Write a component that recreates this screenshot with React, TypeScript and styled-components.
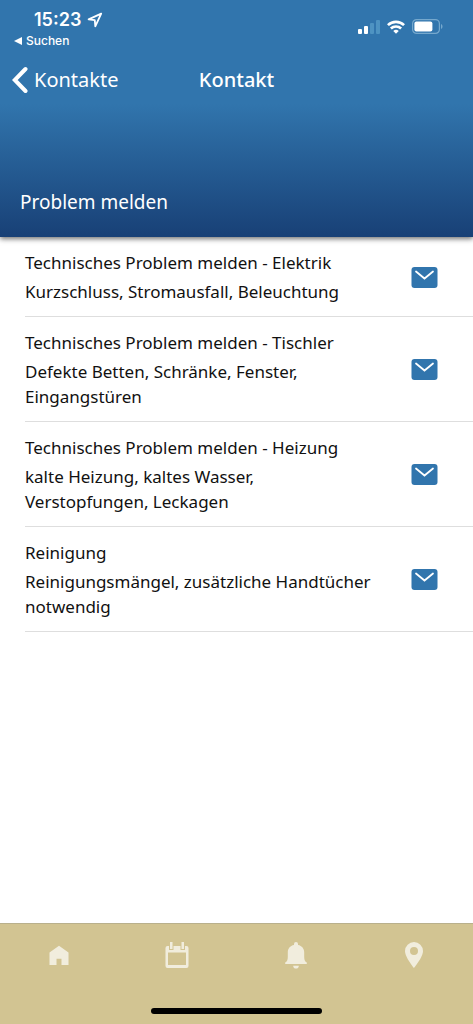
import React from "react";
import styled, { createGlobalStyle } from "styled-components";

const GlobalStyle = createGlobalStyle`
  *, *::before, *::after { box-sizing: border-box; }
  body {
    margin: 0;
    background: #fff;
    color: #111;
    font-family: "Noto Sans", "Open Sans", sans-serif;
  }
  button { border: 0; padding: 0; background: none; color: inherit; font: inherit; cursor: pointer; }
  svg { display: block; }
  h1, h2, h3, p, ul { margin: 0; padding: 0; font-weight: 400; }
`;

const Screen = styled.div`
  display: flex;
  flex-direction: column;
  min-height: 100vh;
`;

const Header = styled.header`
  position: relative;
  display: flex;
  flex-direction: column;
  color: #fff;
  background: linear-gradient(to bottom, #3175ad 0, #3175ad 104px, #184076 100%);
  box-shadow: 0 2px 5px rgba(0, 0, 0, 0.55);
`;

const StatusBar = styled.div`
  display: flex;
  justify-content: space-between;
  align-items: flex-start;
  height: 52px;
  padding: 8px 30px 0 14px;
  font-family: Inter, sans-serif;
`;

const Clock = styled.div`
  display: flex;
  align-items: center;
  gap: 6px;
  padding-left: 20px;
  font-size: 18px;
  font-weight: 600;
  line-height: 24px;
`;

const ReturnLink = styled.a`
  display: flex;
  align-items: center;
  gap: 4px;
  color: inherit;
  font-size: 12px;
  font-weight: 500;
  line-height: 18px;
  text-decoration: none;
`;

const StatusIcons = styled.div`
  display: flex;
  align-items: center;
  gap: 7px;
  padding-top: 11px;
`;

const NavBar = styled.nav`
  display: grid;
  grid-template-columns: 1fr auto 1fr;
  align-items: center;
  height: 56px;
  padding: 0 12px;
`;

const BackButton = styled.button`
  display: flex;
  align-items: center;
  justify-self: start;
  gap: 6px;
  font-size: 20px;
  line-height: 28px;
`;

const NavTitle = styled.h1`
  font-size: 20px;
  font-weight: 500;
  line-height: 28px;
`;

const SectionTitle = styled.h2`
  padding: 80px 20px 21px;
  font-size: 19px;
  line-height: 28px;
`;

const List = styled.ul`
  flex: 1;
  padding-left: 25px;
  list-style: none;
`;

const Row = styled.li`
  display: flex;
  align-items: center;
  gap: 38px;
  padding: 13px 35px 12px 0;
  border-bottom: 1px solid #dedede;
`;

const RowText = styled.div`
  flex: 1;
  font-size: 17px;
  line-height: 25px;
`;

const RowTitle = styled.h3`
  margin-bottom: 4px;
  font-size: inherit;
`;

const MailButton = styled.button`
  flex: none;
`;

const TabBar = styled.nav`
  position: sticky;
  bottom: 0;
  background: #d2c492;
  border-top: 1px solid #b9b08c;
`;

const Tabs = styled.div`
  display: grid;
  grid-template-columns: repeat(4, 1fr);
  height: 62px;
`;

const Tab = styled.button`
  display: flex;
  align-items: center;
  justify-content: center;
  color: #f1eddd;
`;

const HomeIndicator = styled.div`
  width: 36%;
  height: 6px;
  margin: 22px auto 10px;
  border-radius: 3px;
  background: #000;
`;

const LocationIcon = () => (
  <svg width="16" height="16" viewBox="0 0 16 16" fill="none" stroke="currentColor" strokeWidth="1.8" strokeLinejoin="round" aria-hidden="true">
    <path d="M14.2 1.6 1.6 7.4l6.2.8.5 6.2z" />
  </svg>
);

const SignalIcon = () => (
  <svg width="22" height="14" viewBox="0 0 22 14" fill="currentColor" aria-hidden="true">
    <rect x="0" y="9" width="4" height="5" rx="1" />
    <rect x="6" y="6" width="4" height="8" rx="1" />
    <g fill="#4e93c2">
      <rect x="12" y="3" width="4" height="11" rx="1" />
      <rect x="18" y="0" width="4" height="14" rx="1" />
    </g>
  </svg>
);

const WifiIcon = () => (
  <svg width="18" height="14" viewBox="0 0 19 14" aria-hidden="true">
    <g fill="none" stroke="currentColor" strokeWidth="2.8">
      <path d="M1 5a12.2 12.2 0 0 1 17 0" />
      <path d="M4.1 8.6a7.8 7.8 0 0 1 10.8 0" />
    </g>
    <path d="M6.6 11.2a4.2 4.2 0 0 1 5.8 0l-2.9 2.8z" fill="currentColor" />
  </svg>
);

const BatteryIcon = () => (
  <svg width="31" height="15" viewBox="0 0 31 15" aria-hidden="true">
    <rect x=".6" y=".6" width="26.8" height="13.8" rx="4" fill="none" stroke="#75a8cd" strokeWidth="1.2" />
    <path d="M29 5v5c2-.8 2-4.2 0-5z" fill="#75a8cd" />
    <rect x="2.4" y="2.5" width="18" height="10" rx="2" fill="currentColor" />
  </svg>
);

const BackIcon = () => (
  <svg width="16" height="28" viewBox="0 0 16 28" fill="none" stroke="currentColor" strokeWidth="4" strokeLinecap="round" strokeLinejoin="miter" aria-hidden="true">
    <path d="M13.5 3 2.8 14l10.7 11" />
  </svg>
);

const MailIcon = () => (
  <svg width="27" height="21" viewBox="0 0 27 21" aria-hidden="true">
    <rect x=".5" width="26" height="21" rx="3" fill="#3175ad" />
    <path d="m5 4.5 8.5 7L22 4.500" fill="none" stroke="#fff" strokeWidth="1.8" strokeLinecap="round" />
  </svg>
);

const HomeIcon = () => (
  <svg width="20" height="20" viewBox="0 0 20 20" fill="currentColor" aria-hidden="true">
    <path d="M10 .7.5 7.500V20h7v-6.200h5V20h7V7.500z" />
  </svg>
);

const CalendarIcon = () => (
  <svg width="24" height="26" viewBox="0 0 24 26" fill="currentColor" aria-hidden="true">
    <path fillRule="evenodd" d="M2.5 4H4v4h4.500V4h7v4H20V4h1.500A2 2 0 0 1 23.500 6v18a2 2 0 0 1-2 2h-19a2 2 0 0 1-2-2V6a2 2 0 0 1 2-2zM3 10.500V23h18v-12.500z" />
    <rect x="5" y="0" width="2.5" height="7" />
    <rect x="16.5" y="0" width="2.5" height="7" />
  </svg>
);

const BellIcon = () => (
  <svg width="22" height="27" viewBox="0 0 22 27" fill="currentColor" aria-hidden="true">
    <path d="M11 0a2 2 0 0 0-2 2v1C5 3.700 2.800 6.700 2.800 10.500v4.500C2.800 18 2 19.500.2 20.500V22h21.600v-1.500C20 19.500 19.200 18 19.200 15v-4.500C19.200 6.700 17 3.700 13 3V2a2 2 0 0 0-2-2zM8.200 23.700h5.600a2.800 2.800 0 0 1-5.600 0z" />
  </svg>
);

const PinIcon = () => (
  <svg width="18" height="26" viewBox="0 0 18 26" fill="currentColor" aria-hidden="true">
    <path fillRule="evenodd" d="M9 0a9 9 0 0 0-9 9c0 6.300 9 17 9 17s9-10.700 9-17a9 9 0 0 0-9-9zm0 5a4 4 0 1 1 0 8 4 4 0 0 1 0-8z" />
  </svg>
);

const contacts = [
  { title: "Technisches Problem melden - Elektrik", text: "Kurzschluss, Stromausfall, Beleuchtung" },
  { title: "Technisches Problem melden - Tischler", text: "Defekte Betten, Schränke, Fenster, Eingangstüren" },
  { title: "Technisches Problem melden - Heizung", text: "kalte Heizung, kaltes Wasser, Verstopfungen, Leckagen" },
  { title: "Reinigung", text: "Reinigungsmängel, zusätzliche Handtücher notwendig" },
];

const tabs = [
  { label: "Start", Icon: HomeIcon },
  { label: "Kalender", Icon: CalendarIcon },
  { label: "Mitteilungen", Icon: BellIcon },
  { label: "Standort", Icon: PinIcon },
];

export default function App() {
  return (
    <Screen>
      <GlobalStyle />
      <Header>
        <StatusBar>
          <div>
            <Clock>
              15:23
              <LocationIcon />
            </Clock>
            <ReturnLink href="#suchen">
              <svg width="8" height="8" viewBox="0 0 8 8" fill="currentColor" aria-hidden="true">
                <path d="M0 4 8 0v8z" />
              </svg>
              Suchen
            </ReturnLink>
          </div>
          <StatusIcons>
            <SignalIcon />
            <WifiIcon />
            <BatteryIcon />
          </StatusIcons>
        </StatusBar>
        <NavBar>
          <BackButton type="button">
            <BackIcon />
            Kontakte
          </BackButton>
          <NavTitle>Kontakt</NavTitle>
        </NavBar>
        <SectionTitle>Problem melden</SectionTitle>
      </Header>
      <List>
        {contacts.map(({ title, text }) => (
          <Row key={title}>
            <RowText>
              <RowTitle>{title}</RowTitle>
              <p>{text}</p>
            </RowText>
            <MailButton type="button" aria-label={`E-Mail: ${title}`}>
              <MailIcon />
            </MailButton>
          </Row>
        ))}
      </List>
      <TabBar>
        <Tabs>
          {tabs.map(({ label, Icon }) => (
            <Tab key={label} type="button" aria-label={label}>
              <Icon />
            </Tab>
          ))}
        </Tabs>
        <HomeIndicator />
      </TabBar>
    </Screen>
  );
}
